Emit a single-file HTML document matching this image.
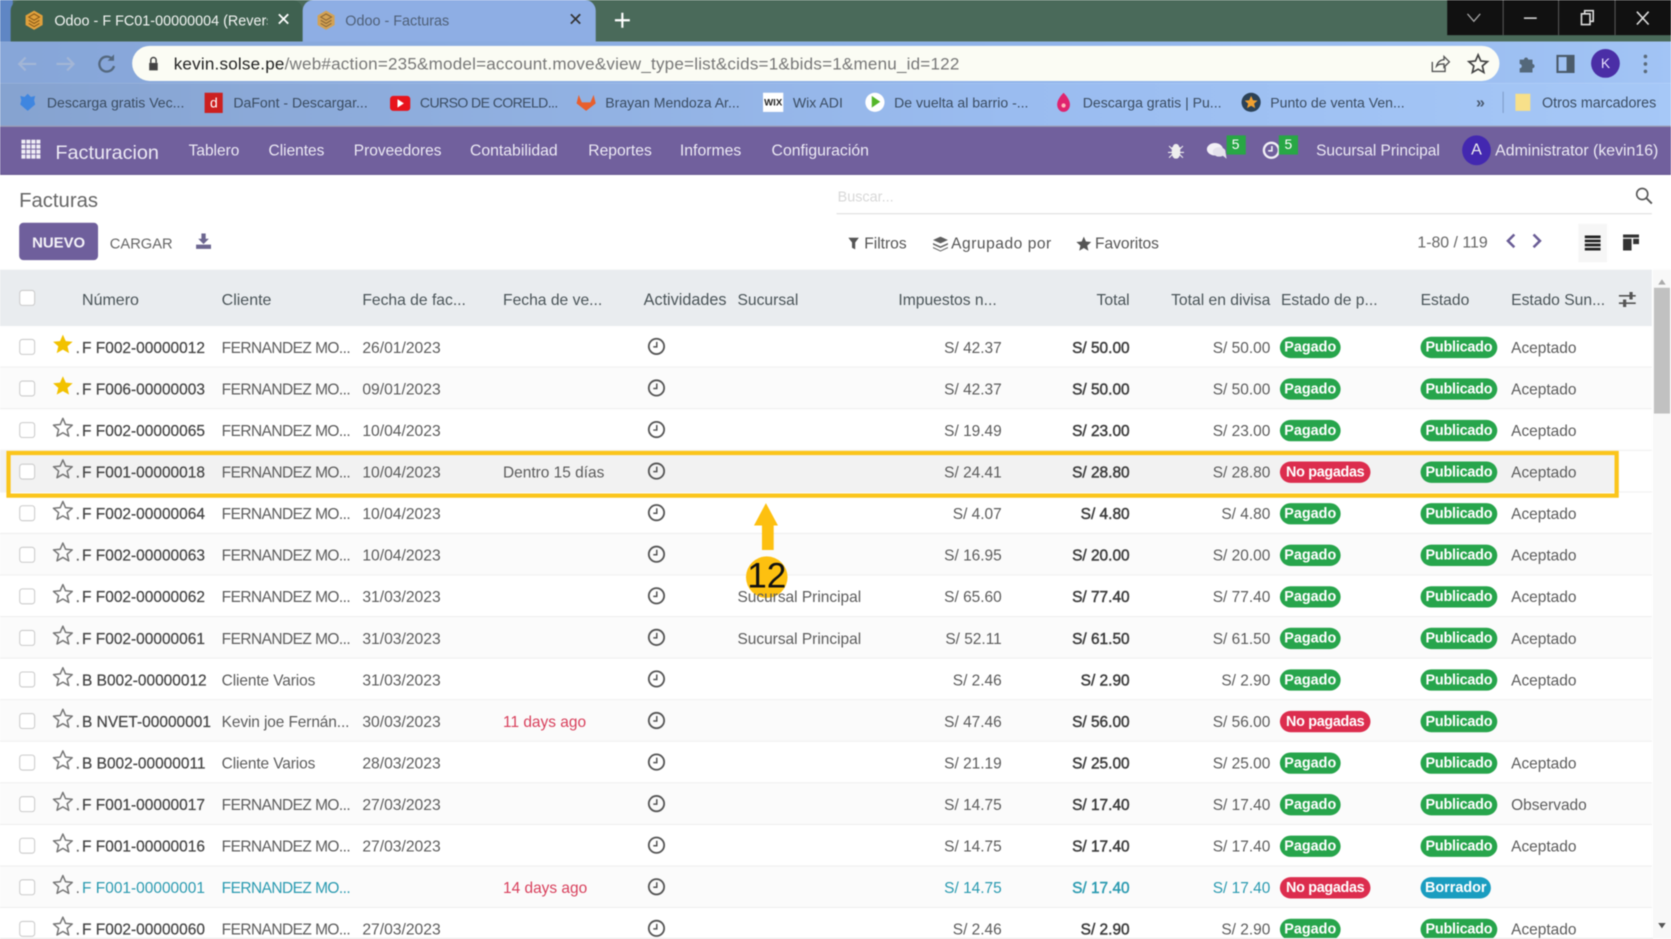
<!DOCTYPE html>
<html lang="es"><head><meta charset="utf-8"><title>Odoo - Facturas</title>
<style>
html,body{margin:0;padding:0;width:1671px;height:939px;overflow:hidden;background:#fff}
#w{position:absolute;left:0;top:0;width:1568px;height:881px;overflow:hidden;transform-origin:0 0;transform:scale(1.06569,1.06583);font-family:"Liberation Sans",sans-serif;color:#5c5c5c;font-size:14.5px;filter:blur(.45px)}
#w div,#w span,#w svg{position:absolute;white-space:nowrap}
.bm{top:88px;font-size:13.2px;line-height:18px;color:#3a4c62}
.nv{top:132px;color:#ece9f4;line-height:20px;font-size:14.8px}
.h{top:272px;line-height:20px;color:#4a5458;font-size:14.7px}
.r{left:0;width:1550px;height:38px;line-height:43px;border-bottom:1px solid #eee;background:#fff}
.r.o{background:#fbfbfb}
.x{left:18px;top:12px;width:13px;height:13px;border:1.5px solid #ccc;border-radius:3px;background:#fff}
.st{left:49px;top:7px;width:20px;height:20px;color:#777}
.ck{left:607px;top:10px;width:18px;height:18px;color:#555}
.n{left:77px;color:#444;-webkit-text-stroke:.2px #444}
.n::before{content:".";position:absolute;left:-6px;color:#666}
.c{left:208px;letter-spacing:-.5px}
.d{left:340px;font-size:14.7px}
.v{left:472px}
.s{left:692px}
.i{right:610px}
.t{right:490px;color:#3c3c3c;-webkit-text-stroke:.45px #3c3c3c}
.u{right:358px}
.e{left:1418px}
.g,.nr,.bl{top:10px;height:20px;line-height:20px;border-radius:10px;color:#fff;font-weight:bold;font-size:13.5px;text-align:center}
.g{background:#27a54c}.nr{background:#dc2d4e}.bl{background:#1a9dc0}
.b1{left:1201px;width:57px}.b2{left:1201px;width:85px;letter-spacing:-.3px}.b3{left:1333px;width:72px;letter-spacing:-.2px}.b4{left:1333px;width:66px}
.dr span{color:#2a9ab0;-webkit-text-stroke:0}
.dr .t{-webkit-text-stroke:.4px #2a9ab0}
.dr span.nr,.dr span.bl{color:#fff}
.dr span.rd,.rd{color:#d8405c!important}
.tb{top:11px;line-height:18px;font-size:13.5px}
.cp{top:220px;line-height:19px;color:#555;font-size:14.6px}
</style></head><body><div id="w">
<svg width="0" height="0" style="left:0;top:0"><defs>
<symbol id="so" viewBox="0 0 20 20"><path d="M10 1.500l2.500 5.800 6.300.6-4.800 4.100 1.500 6.200L10 15l-5.500 3.200L6 12 1.200 7.900l6.300-.6z" fill="none" stroke="currentColor" stroke-width="1.400" stroke-linejoin="round"/></symbol>
<symbol id="sf" viewBox="0 0 20 20"><path d="M10 1l2.700 6 6.500.6-4.900 4.300 1.500 6.400L10 15l-5.800 3.300 1.500-6.400L.8 7.600l6.500-.6z" fill="#f2c200"/></symbol>
<symbol id="cl" viewBox="0 0 18 18"><circle cx="9" cy="9" r="7.200" fill="none" stroke="currentColor" stroke-width="1.700"/><path d="M9.300 4.800v4.700H6" fill="none" stroke="currentColor" stroke-width="1.400"/></symbol>
<symbol id="od" viewBox="0 0 20 20"><path d="M10 1l8 4.500v9L10 19l-8-4.500v-9z" fill="#e0a03c"/><path d="M5 7l5-3 5 3-5 3zM5 10l5 3 5-3M5 13l5 3 5-3" fill="none" stroke="#8a5b18" stroke-width="1"/></symbol>
</defs></svg>

<!-- tab strip -->
<div style="left:0;top:0;width:1568px;height:39px;background:#4a6a5a"></div>
<div style="left:0;top:0;width:12px;height:39px;background:#5f86c4"></div>
<div style="left:10px;top:0;width:274px;height:39px;background:#3f6150;border-radius:10px 10px 0 0"></div>
<div style="left:284px;top:0;width:275px;height:40px;background:#8eaee4;border-radius:10px 10px 0 0"></div>
<svg width="20" height="20" style="left:22px;top:9px"><use href="#od"/></svg>
<span class="tb" style="left:51px;color:#f2f4f2;width:200px;overflow:hidden">Odoo - F FC01-00000004 (Revers</span>
<span style="left:259px;top:9px;color:#fff;font-size:17px;line-height:20px">✕</span>
<svg width="20" height="20" style="left:296px;top:9px;opacity:.85"><use href="#od"/></svg>
<span class="tb" style="left:324px;color:#4f6078">Odoo - Facturas</span>
<span style="left:533px;top:9px;color:#333;font-size:17px;line-height:20px">✕</span>
<svg width="16" height="16" style="left:576px;top:11px"><path d="M8 1v14M1 8h14" stroke="#fff" stroke-width="2"/></svg>
<div style="left:1358px;top:0;width:210px;height:33px;background:#111"></div>
<div style="left:1410px;top:0;width:1px;height:33px;background:#555"></div>
<div style="left:1462px;top:0;width:1px;height:33px;background:#555"></div>
<div style="left:1515px;top:0;width:1px;height:33px;background:#555"></div>
<svg width="210" height="33" style="left:1358px;top:0"><path d="M19 13l6 7 6-7" fill="none" stroke="#aaa" stroke-width="1.200"/><path d="M72 17h12" stroke="#ddd" stroke-width="1.500"/><path d="M126 13h8v10h-8zM129 13v-3h8v10h-3" fill="none" stroke="#ddd" stroke-width="1.500"/><path d="M178 11l11 12M189 11l-11 12" stroke="#ddd" stroke-width="1.500"/></svg>

<!-- toolbar -->
<div style="left:0;top:39px;width:1568px;height:39px;background:linear-gradient(90deg,#87a6d8,#8fb3ea 60%,#a2c4f5)"></div>
<div style="left:0;top:78px;width:1568px;height:40px;background:linear-gradient(90deg,#86a3d0,#9abcf0 60%,#a6c8f7)"></div>
<svg width="110" height="26" style="left:14px;top:47px"><path d="M20 13H5M10 7l-6 6 6 6" fill="none" stroke="#a3b6d6" stroke-width="2"/><path d="M39 13h15M49 7l6 6-6 6" fill="none" stroke="#a3b6d6" stroke-width="2"/><path d="M91 8a7 7 0 1 0 2 7" fill="none" stroke="#54687f" stroke-width="2.200"/><path d="M93 4v6h-6z" fill="#54687f"/></svg>
<div style="left:124px;top:43px;width:1283px;height:33px;border-radius:17px;background:#fbfcf4"></div>
<svg width="14" height="16" style="left:137px;top:52px"><path d="M3 7h8v7H3z" fill="#444"/><path d="M4.500 7V4.500a2.500 2.500 0 0 1 5 0V7" fill="none" stroke="#444" stroke-width="1.400"/></svg>
<span style="left:163px;top:51px;font-size:16px;line-height:20px;color:#777;letter-spacing:.19px"><span style="position:static;color:#222">kevin.solse.pe</span>/web#action=235&amp;model=account.move&amp;view_type=list&amp;cids=1&amp;bids=1&amp;menu_id=122</span>
<svg width="22" height="22" style="left:1339px;top:49px"><path d="M5 9v9h12v-4M9 13c1-4 4-6 7-6V4l5 5-5 5v-3c-3 0-5 0-7 2z" fill="none" stroke="#555" stroke-width="1.300"/></svg>
<svg width="22" height="22" style="left:1376px;top:49px"><path d="M11 2.500l2.500 5.700 6.200.6-4.700 4.100 1.400 6.100L11 15.900l-5.400 3.100L7 12.900 2.300 8.800l6.200-.6z" fill="none" stroke="#444" stroke-width="1.600"/></svg>
<svg width="20" height="20" style="left:1423px;top:50px"><path d="M3 6h4a2 2 0 1 1 4 0h4v4a2 2 0 1 1 0 4v4H3v-4a2 2 0 1 0 0-4z" fill="#54687a"/></svg>
<svg width="18" height="18" style="left:1460px;top:51px"><rect x="1.500" y="1.500" width="15" height="15" fill="none" stroke="#4b5b6a" stroke-width="2"/><rect x="10" y="2" width="6" height="14" fill="#4b5b6a"/></svg>
<div style="left:1493px;top:46px;width:27px;height:27px;border-radius:50%;background:#4a2ea6;color:#e8e0ff;text-align:center;line-height:27px;font-size:13px">K</div>
<svg width="6" height="20" style="left:1541px;top:50px"><circle cx="3" cy="3" r="1.700" fill="#5a6a7a"/><circle cx="3" cy="10" r="1.700" fill="#5a6a7a"/><circle cx="3" cy="17" r="1.700" fill="#5a6a7a"/></svg>

<!-- bookmarks -->
<svg width="18" height="18" style="left:17px;top:87px"><path d="M9 1l3 3 4-1-1 4 1 4-7 6-7-6 1-4-1-4 4 1z" fill="#3f86e0"/></svg>
<span class="bm" style="left:44px">Descarga gratis Vec...</span>
<div style="left:192px;top:87px;width:17px;height:19px;background:#cc2020"></div><span style="left:197px;top:87px;color:#fff;font-size:13px;line-height:19px">d</span>
<span class="bm" style="left:219px">DaFont - Descargar...</span>
<div style="left:366px;top:90px;width:19px;height:14px;background:#e8141c;border-radius:3px"></div><svg width="8" height="8" style="left:372px;top:93px"><path d="M1 0l6 4-6 4z" fill="#fff"/></svg>
<span class="bm" style="left:394px;letter-spacing:-.55px">CURSO DE CORELD...</span>
<svg width="20" height="18" style="left:540px;top:87px"><path d="M10 17L1 10l2-8 3 7h8l3-7 2 8z" fill="#e85f2d"/></svg>
<span class="bm" style="left:568px">Brayan Mendoza Ar...</span>
<div style="left:716px;top:87px;width:19px;height:18px;background:#fff;color:#222;font-size:9px;font-weight:bold;line-height:18px;text-align:center">WIX</div>
<span class="bm" style="left:744px">Wix ADI</span>
<div style="left:812px;top:87px;width:18px;height:18px;border-radius:50%;background:#fff"></div><svg width="10" height="11" style="left:817px;top:90px"><path d="M1 0l8 5.500-8 5.500z" fill="#55b72a"/></svg>
<span class="bm" style="left:839px">De vuelta al barrio -...</span>
<svg width="16" height="20" style="left:990px;top:86px"><path d="M8 1c4 4 6 8 6 11a6 7 0 0 1-12 0c0-3 2-7 6-11z" fill="#e0246f"/><circle cx="8" cy="13" r="2" fill="#fbb"/></svg>
<span class="bm" style="left:1016px">Descarga gratis | Pu...</span>
<div style="left:1165px;top:87px;width:18px;height:18px;border-radius:50%;background:#2c4257"></div><svg width="12" height="12" style="left:1168px;top:90px"><path d="M6 0l1.800 4 4.200.4-3.200 2.800 1 4.200L6 9.200 2.200 11.400l1-4.200L0 4.400 4.200 4z" fill="#f0a030"/></svg>
<span class="bm" style="left:1192px">Punto de venta Ven...</span>
<span class="bm" style="left:1385px;font-weight:bold;font-size:15px;color:#4a5a70">»</span>
<div style="left:1410px;top:86px;width:1px;height:20px;background:#7f9cc9"></div>
<svg width="16" height="18" style="left:1421px;top:87px"><path d="M1 1h9l5 0v16H1z" fill="#f7e08a"/></svg>
<span class="bm" style="left:1447px;font-size:13.4px">Otros marcadores</span>

<!-- nav -->
<div style="left:0;top:118px;width:1568px;height:46px;background:#71609d;border-top:1px solid #9aa0b4;box-sizing:border-box;border-bottom:1px solid #645590"></div>
<svg width="18" height="18" style="left:19.500px;top:131px"><path d="M0 0h3.800v3.800H0zM4.700 0h3.800v3.800H4.700zM9.400 0h3.800v3.800H9.400zM14.100 0h3.800v3.800h-3.800zM0 4.700h3.800v3.800H0zM4.700 4.700h3.800v3.800H4.700zM9.400 4.700h3.800v3.800H9.400zM14.100 4.700h3.800v3.800h-3.800zM0 9.400h3.800v3.800H0zM4.700 9.400h3.800v3.800H4.700zM9.400 9.400h3.800v3.800H9.400zM14.100 9.400h3.800v3.800h-3.800zM0 14.100h3.800v3.800H0zM4.700 14.100h3.800v3.800H4.700zM9.400 14.100h3.800v3.800H9.400zM14.100 14.100h3.800v3.800h-3.800z" fill="#f0eef6"/></svg>
<span class="nv" style="left:52px;font-size:18.6px;top:132px;line-height:22px">Facturacion</span>
<span class="nv" style="left:177px;font-size:14.5px">Tablero</span>
<span class="nv" style="left:252px;font-size:14.5px">Clientes</span>
<span class="nv" style="left:332px;font-size:14.5px">Proveedores</span>
<span class="nv" style="left:441px">Contabilidad</span>
<span class="nv" style="left:552px;font-size:14.7px">Reportes</span>
<span class="nv" style="left:638px">Informes</span>
<span class="nv" style="left:724px">Configuración</span>
<svg width="15" height="14" style="left:1096px;top:135px"><path d="M5 3a2.500 2.500 0 0 1 5 0zM4 3.500h7v5a3.500 5 0 0 1-7 0zM1 2l3 3M14 2l-3 3M0 8h4M15 8h-4M1 13l3-3M14 13l-3-3" fill="#eee" stroke="#eee" stroke-width="1"/></svg>
<svg width="21" height="17" style="left:1132px;top:133px"><ellipse cx="8" cy="7" rx="7.500" ry="5.800" fill="#f2f0f6"/><ellipse cx="12" cy="9.500" rx="6" ry="4.500" fill="#e4e1ec"/><path d="M14 12l5 4-1-6z" fill="#e4e1ec"/></svg>
<div style="left:1150.500px;top:127px;width:18px;height:18px;background:#28a745;color:#fff;font-size:13px;text-align:center;line-height:18px">5</div>
<svg width="18" height="18" style="left:1184px;top:132px"><circle cx="9" cy="9" r="7" fill="none" stroke="#f2f0f6" stroke-width="2.200"/><path d="M9.500 5v4.500H6" fill="none" stroke="#f2f0f6" stroke-width="1.500"/></svg>
<div style="left:1200px;top:127px;width:18px;height:18px;background:#28a745;color:#fff;font-size:13px;text-align:center;line-height:18px">5</div>
<span class="nv" style="left:1235px;font-size:14.5px">Sucursal Principal</span>
<div style="left:1372px;top:127px;width:27px;height:28px;border-radius:50%;background:#4328b0;color:#eee;text-align:center;line-height:28px;font-size:15px">A</div>
<span class="nv" style="left:1403px;font-size:14.9px">Administrator (kevin16)</span>

<!-- control panel -->
<span style="left:18px;top:178px;font-size:19px;line-height:22px;color:#666">Facturas</span>
<div style="left:18px;top:209px;width:74px;height:35px;background:#6f5f9c;border-radius:4px;color:#f4f2f8;font-weight:bold;font-size:14px;line-height:37px;text-align:center">NUEVO</div>
<span style="left:103px;top:219px;font-size:13.8px;line-height:20px;color:#666">CARGAR</span>
<svg width="16" height="15" style="left:183px;top:219px"><path d="M6 0h4v5h3L8 10 3 5h3zM1 10.500h14V14.500H1z" fill="#6c6690"/></svg>
<span style="left:786px;top:176px;font-size:13.5px;line-height:18px;color:#d8d8d8">Buscar...</span>
<div style="left:785px;top:200px;width:765px;height:1px;background:#ddd"></div>
<svg width="17" height="17" style="left:1534px;top:175px"><circle cx="7" cy="7" r="5.200" fill="none" stroke="#555" stroke-width="1.500"/><path d="M11 11l5 5" stroke="#555" stroke-width="1.800"/></svg>
<svg width="10" height="11" style="left:796px;top:223px"><path d="M0 0h10L6.500 4.500V11L3.500 9.500V4.500z" fill="#555"/></svg>
<span class="cp" style="left:811px">Filtros</span>
<svg width="15" height="14" style="left:874.500px;top:221.500px"><path d="M7.500 0l7 3.200-7 3.200-7-3.200zM.5 6l7 3.200 7-3.200v1.500l-7 3.200-7-3.200zM.5 9.800l7 3.200 7-3.200v1l-7 3.200-7-3.200z" fill="#5f5f5f"/></svg>
<span class="cp" style="left:892.500px;letter-spacing:.5px">Agrupado por</span>
<svg width="14" height="14" style="left:1009.600px;top:221.500px"><path d="M7 0l2 4.600 5 .5-3.800 3.300 1.100 4.900L7 10.700 2.700 13.300l1.100-4.900L0 5.100l5-.5z" fill="#555"/></svg>
<span class="cp" style="left:1027.500px">Favoritos</span>
<span style="left:1330px;top:219px;line-height:19px;color:#666;font-size:14.9px">1-80 / 119</span>
<svg width="36" height="16" style="left:1412px;top:218px"><path d="M9 2L3 8l6 6" fill="none" stroke="#6a5d96" stroke-width="2.400"/><path d="M27 2l6 6-6 6" fill="none" stroke="#6a5d96" stroke-width="2.400"/></svg>
<div style="left:1481px;top:210px;width:27px;height:36px;background:#f6f6f6"></div>
<svg width="15" height="14" style="left:1487px;top:221px"><path d="M0 0h15v2.500H0zM0 3.800h15v2.500H0zM0 7.600h15v2.500H0zM0 11.400h15V14H0z" fill="#222"/></svg>
<svg width="15" height="15" style="left:1523px;top:220px"><path d="M0 0h15v3H0zM0 4h8v11H0zM9.500 4H15v5H9.500z" fill="#333"/></svg>

<!-- list header -->
<div style="left:0;top:253px;width:1550px;height:53px;background:#e9ecef"></div>
<div style="left:18px;top:272px;width:13px;height:13px;border:1.500px solid #ccc;border-radius:3px;background:#fff"></div>
<span class="h" style="left:77px;font-size:15px">Número</span>
<span class="h" style="left:208px;font-size:15px">Cliente</span>
<span class="h" style="left:340px">Fecha de fac...</span>
<span class="h" style="left:472px">Fecha de ve...</span>
<span class="h" style="left:604px;font-size:15.2px">Actividades</span>
<span class="h" style="left:692px">Sucursal</span>
<span class="h" style="left:843px">Impuestos n...</span>
<span class="h" style="right:508px">Total</span>
<span class="h" style="right:376px">Total en divisa</span>
<span class="h" style="left:1202px">Estado de p...</span>
<span class="h" style="left:1333px">Estado</span>
<span class="h" style="left:1418px">Estado Sun...</span>
<svg width="16" height="14" style="left:1519px;top:274px"><path d="M0 3.500h16M0 10.500h16" stroke="#555" stroke-width="1.500"/><path d="M10 0h3v7h-3zM4 7h3v7H4z" fill="#555"/></svg>

<!-- rows -->
<div class="r" style="top:306px"><div class="x"></div><svg class="st"><use href="#sf"/></svg><svg class="ck"><use href="#cl"/></svg><span class="n">F F002-00000012</span><span class="c">FERNANDEZ MO...</span><span class="d">26/01/2023</span><span class="i">S/ 42.37</span><span class="t">S/ 50.00</span><span class="u">S/ 50.00</span><span class="g b1">Pagado</span><span class="g b3">Publicado</span><span class="e">Aceptado</span></div>
<div class="r o" style="top:345px"><div class="x"></div><svg class="st"><use href="#sf"/></svg><svg class="ck"><use href="#cl"/></svg><span class="n">F F006-00000003</span><span class="c">FERNANDEZ MO...</span><span class="d">09/01/2023</span><span class="i">S/ 42.37</span><span class="t">S/ 50.00</span><span class="u">S/ 50.00</span><span class="g b1">Pagado</span><span class="g b3">Publicado</span><span class="e">Aceptado</span></div>
<div class="r" style="top:384px"><div class="x"></div><svg class="st"><use href="#so"/></svg><svg class="ck"><use href="#cl"/></svg><span class="n">F F002-00000065</span><span class="c">FERNANDEZ MO...</span><span class="d">10/04/2023</span><span class="i">S/ 19.49</span><span class="t">S/ 23.00</span><span class="u">S/ 23.00</span><span class="g b1">Pagado</span><span class="g b3">Publicado</span><span class="e">Aceptado</span></div>
<div class="r" style="top:423px"><div style="left:0;top:0;width:1517px;height:38px;background:#f2f2f2"></div><div class="x"></div><svg class="st"><use href="#so"/></svg><svg class="ck"><use href="#cl"/></svg><span class="n">F F001-00000018</span><span class="c">FERNANDEZ MO...</span><span class="d">10/04/2023</span><span class="v">Dentro 15 días</span><span class="i">S/ 24.41</span><span class="t">S/ 28.80</span><span class="u">S/ 28.80</span><span class="nr b2">No pagadas</span><span class="g b3">Publicado</span><span class="e">Aceptado</span></div>
<div class="r" style="top:462px"><div class="x"></div><svg class="st"><use href="#so"/></svg><svg class="ck"><use href="#cl"/></svg><span class="n">F F002-00000064</span><span class="c">FERNANDEZ MO...</span><span class="d">10/04/2023</span><span class="i">S/ 4.07</span><span class="t">S/ 4.80</span><span class="u">S/ 4.80</span><span class="g b1">Pagado</span><span class="g b3">Publicado</span><span class="e">Aceptado</span></div>
<div class="r o" style="top:501px"><div class="x"></div><svg class="st"><use href="#so"/></svg><svg class="ck"><use href="#cl"/></svg><span class="n">F F002-00000063</span><span class="c">FERNANDEZ MO...</span><span class="d">10/04/2023</span><span class="i">S/ 16.95</span><span class="t">S/ 20.00</span><span class="u">S/ 20.00</span><span class="g b1">Pagado</span><span class="g b3">Publicado</span><span class="e">Aceptado</span></div>
<div class="r" style="top:540px"><div class="x"></div><svg class="st"><use href="#so"/></svg><svg class="ck"><use href="#cl"/></svg><span class="n">F F002-00000062</span><span class="c">FERNANDEZ MO...</span><span class="d">31/03/2023</span><span class="s" style="z-index:7">Sucursal Principal</span><span class="i">S/ 65.60</span><span class="t">S/ 77.40</span><span class="u">S/ 77.40</span><span class="g b1">Pagado</span><span class="g b3">Publicado</span><span class="e">Aceptado</span></div>
<div class="r o" style="top:579px"><div class="x"></div><svg class="st"><use href="#so"/></svg><svg class="ck"><use href="#cl"/></svg><span class="n">F F002-00000061</span><span class="c">FERNANDEZ MO...</span><span class="d">31/03/2023</span><span class="s">Sucursal Principal</span><span class="i">S/ 52.11</span><span class="t">S/ 61.50</span><span class="u">S/ 61.50</span><span class="g b1">Pagado</span><span class="g b3">Publicado</span><span class="e">Aceptado</span></div>
<div class="r" style="top:618px"><div class="x"></div><svg class="st"><use href="#so"/></svg><svg class="ck"><use href="#cl"/></svg><span class="n">B B002-00000012</span><span class="c" style="letter-spacing:-.1px">Cliente Varios</span><span class="d">31/03/2023</span><span class="i">S/ 2.46</span><span class="t">S/ 2.90</span><span class="u">S/ 2.90</span><span class="g b1">Pagado</span><span class="g b3">Publicado</span><span class="e">Aceptado</span></div>
<div class="r o" style="top:657px"><div class="x"></div><svg class="st"><use href="#so"/></svg><svg class="ck"><use href="#cl"/></svg><span class="n">B NVET-00000001</span><span class="c" style="letter-spacing:-.1px">Kevin joe Fernán...</span><span class="d">30/03/2023</span><span class="v rd">11 days ago</span><span class="i">S/ 47.46</span><span class="t">S/ 56.00</span><span class="u">S/ 56.00</span><span class="nr b2">No pagadas</span><span class="g b3">Publicado</span></div>
<div class="r" style="top:696px"><div class="x"></div><svg class="st"><use href="#so"/></svg><svg class="ck"><use href="#cl"/></svg><span class="n">B B002-00000011</span><span class="c" style="letter-spacing:-.1px">Cliente Varios</span><span class="d">28/03/2023</span><span class="i">S/ 21.19</span><span class="t">S/ 25.00</span><span class="u">S/ 25.00</span><span class="g b1">Pagado</span><span class="g b3">Publicado</span><span class="e">Aceptado</span></div>
<div class="r o" style="top:735px"><div class="x"></div><svg class="st"><use href="#so"/></svg><svg class="ck"><use href="#cl"/></svg><span class="n">F F001-00000017</span><span class="c">FERNANDEZ MO...</span><span class="d">27/03/2023</span><span class="i">S/ 14.75</span><span class="t">S/ 17.40</span><span class="u">S/ 17.40</span><span class="g b1">Pagado</span><span class="g b3">Publicado</span><span class="e">Observado</span></div>
<div class="r" style="top:774px"><div class="x"></div><svg class="st"><use href="#so"/></svg><svg class="ck"><use href="#cl"/></svg><span class="n">F F001-00000016</span><span class="c">FERNANDEZ MO...</span><span class="d">27/03/2023</span><span class="i">S/ 14.75</span><span class="t">S/ 17.40</span><span class="u">S/ 17.40</span><span class="g b1">Pagado</span><span class="g b3">Publicado</span><span class="e">Aceptado</span></div>
<div class="r o dr" style="top:813px"><div class="x"></div><svg class="st"><use href="#so"/></svg><svg class="ck"><use href="#cl"/></svg><span class="n">F F001-00000001</span><span class="c">FERNANDEZ MO...</span><span class="v rd">14 days ago</span><span class="i">S/ 14.75</span><span class="t">S/ 17.40</span><span class="u">S/ 17.40</span><span class="nr b2">No pagadas</span><span class="bl b4">Borrador</span></div>
<div class="r" style="top:852px"><div class="x"></div><svg class="st"><use href="#so"/></svg><svg class="ck"><use href="#cl"/></svg><span class="n">F F002-00000060</span><span class="c">FERNANDEZ MO...</span><span class="d">27/03/2023</span><span class="i">S/ 2.46</span><span class="t">S/ 2.90</span><span class="u">S/ 2.90</span><span class="g b1">Pagado</span><span class="g b3">Publicado</span><span class="e">Aceptado</span></div>
<div style="left:0;top:880px;width:1568px;height:1px;background:#e6e6e6"></div>

<!-- scrollbar -->
<div style="left:1551px;top:253px;width:17px;height:628px;background:#f8f8f8"></div>
<div style="left:1552px;top:270px;width:15px;height:118px;background:#c1c1c1"></div>
<svg width="17" height="10" style="left:1551px;top:259px"><path d="M5 8l3.500-5L12 8z" fill="#aaa"/></svg>
<svg width="17" height="10" style="left:1551px;top:864px"><path d="M5 2l3.500 5L12 2z" fill="#555"/></svg>

<!-- annotations -->
<div style="left:6px;top:423px;width:1505px;height:36px;border:4px solid #fbc51b;z-index:5"></div>
<svg width="34" height="50" style="left:701px;top:470px;z-index:5"><path d="M17.700 2L29 23h-4v23H14V23H6.500z" fill="#fdc010"/></svg>
<div style="left:700px;top:522px;width:39px;height:39px;border-radius:50%;background:#fdc010;color:#111;font-size:33px;line-height:35px;text-align:center;z-index:5">12</div>
</div></body></html>
